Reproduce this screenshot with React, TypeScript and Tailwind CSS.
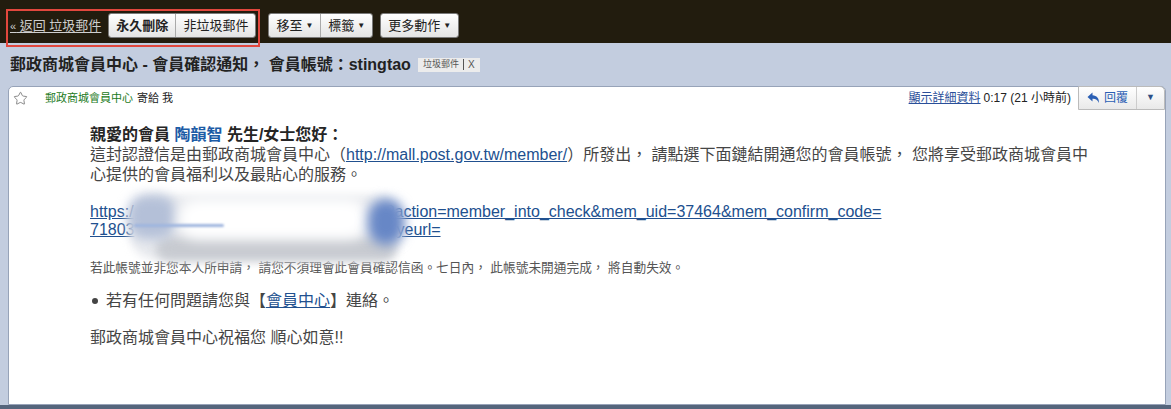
import { Star } from "lucide-react";

const font = "font-['Liberation_Sans','Noto_Sans_CJK_TC',sans-serif]";

const ToolButton = ({
  label,
  bold,
  caret,
  className,
}: {
  label: string;
  bold?: boolean;
  caret?: boolean;
  className?: string;
}) => {
  return (
    <button
      type="button"
      className={`flex h-[23px] items-center gap-[3px] bg-gradient-to-b from-[#ffffff] to-[#e4e4e4] px-[7px] text-[13px] text-[#222] ${
        bold ? "font-bold" : ""
      } ${className ?? ""}`}
    >
      {label}
      {caret && <span className="text-[8px] leading-none">▼</span>}
    </button>
  );
};

const ReplyIcon = () => (
  <svg width="13" height="12" viewBox="0 0 13 12">
    <path
      d="M5.5 0.5 L0.5 5 L5.5 9.5 V6.8 C8.5 6.6 10.6 7.8 11.8 11 C12.4 6.4 9.6 3.5 5.5 3.3 Z"
      fill="#2b5fb4"
    />
  </svg>
);

export default function App() {
  return (
    <div
      className={`relative h-[409px] w-[1171px] overflow-hidden bg-[#c3cddf] ${font}`}
    >
      {/* dark toolbar */}
      <div className="relative flex h-[43px] items-center bg-[#221c0e] pl-[10px] pt-[8px]">
        <a className="text-[13px] text-[#cfcfcf] underline underline-offset-2">
          <span className="text-[11px]">«</span> 返回 垃圾郵件
        </a>
        <div className="ml-[7px] flex rounded-[3px] border border-[#7a7a7a]">
          <ToolButton label="永久刪除" bold className="rounded-l-[2px]" />
          <ToolButton
            label="非垃圾郵件"
            className="rounded-r-[2px] border-l border-[#aaa]"
          />
        </div>
        <div className="ml-[12px] flex rounded-[3px] border border-[#7a7a7a]">
          <ToolButton label="移至" caret className="rounded-l-[2px]" />
          <ToolButton
            label="標籤"
            caret
            className="rounded-r-[2px] border-l border-[#aaa]"
          />
        </div>
        <div className="ml-[7px] flex rounded-[3px] border border-[#7a7a7a]">
          <ToolButton label="更多動作" caret className="rounded-[2px]" />
        </div>
        <div className="absolute left-[6px] top-[9px] h-[38px] w-[254px] border-2 border-[#e2473d]" />
      </div>

      {/* subject */}
      <div className="flex h-[43px] items-center gap-[7px] pl-[10px]">
        <h1 className="text-[16px] font-bold text-[#222]">
          郵政商城會員中心 - 會員確認通知， 會員帳號：stingtao
        </h1>
        <span className="flex h-[14px] items-center gap-[4px] bg-[#ececec] px-[5px] text-[9px] text-[#555]">
          垃圾郵件
          <span className="h-[11px] border-l border-[#555]" />
          <span className="text-[10px]">X</span>
        </span>
      </div>

      {/* message card */}
      <div className="ml-[8px] mr-[5px] h-[319px] rounded-t-[5px] border border-[#97a3b8] bg-white">
        <div className="flex h-[22px] items-center">
          <Star size={15} strokeWidth={1.3} className="ml-[4px] text-[#6f6f6f]" />
          <span className="ml-[17px] text-[11px] text-[#1b7a1b]">郵政商城會員中心</span>
          <span className="ml-[4px] text-[11px] text-[#222]">寄給 我</span>
          <div className="ml-auto flex items-center">
            <a className="text-[12px] text-[#2a4f99] underline">顯示詳細資料</a>
            <span className="ml-[3px] text-[12px] text-[#222]">0:17 (21 小時前)</span>
            <div className="ml-[7px] flex h-[24px] self-start rounded-tr-[5px] border border-[#bbb] bg-gradient-to-b from-[#ffffff] to-[#e9e9e9]">
              <button
                type="button"
                className="flex items-center gap-[4px] px-[8px] text-[12px] text-[#2b5fb4]"
              >
                <ReplyIcon />
                回覆
              </button>
              <button
                type="button"
                className="flex w-[28px] items-center justify-center border-l border-[#ccc] text-[9px] text-[#2d4f86]"
              >
                ▼
              </button>
            </div>
          </div>
        </div>

        <div className="relative pl-[81px] pt-[16px] text-[16px] leading-[20px] text-[#454545]">
          <p className="font-bold text-[#252525]">
            親愛的會員 <span className="text-[#1d5ca6]">陶韻智</span> 先生/女士您好：
          </p>
          <p>
            <span>這封認證信是由郵政商城會員中心（</span>
            <a className="text-[#21508f] underline">http://mall.post.gov.tw/member/</a>
            <span>）所發出， 請點選下面鏈結開通您的會員帳號， 您將享受郵政商城會員中</span>
            <br />
            <span>心提供的會員福利以及最貼心的服務。</span>
          </p>
          <p className="mt-[18px] leading-[18px]">
            <a className="text-[#21508f] underline">
              https:/
              <span className="inline-block w-[252px]" />
              ?action=member_into_check&amp;mem_uid=37464&amp;mem_confirm_code=
              <br />
              71803
              <span className="inline-block w-[262px]" />
              yeurl=
            </a>
          </p>
          <p className="mt-[21px] text-[12.7px] leading-[16px] text-[#555]">
            若此帳號並非您本人所申請， 請您不須理會此會員確認信函。七日內， 此帳號未開通完成， 將自動失效。
          </p>
          <div className="mt-[15px] flex items-center">
            <span className="ml-[2px] mr-[8px] h-[6px] w-[6px] rounded-full bg-[#444]" />
            <span>
              若有任何問題請您與【<a className="text-[#21508f] underline">會員中心</a>】連絡。
            </span>
          </div>
          <p className="mt-[17px]">郵政商城會員中心祝福您 順心如意!!</p>

          {/* redacted part of the link */}
          <div className="pointer-events-none absolute left-[119px] top-[84px] h-[72px] w-[285px]">
            <div className="absolute left-[2px] top-[2px] h-[64px] w-[272px] rounded-[24px] bg-[#e8eaee] blur-[4px]" />
            <div className="absolute left-[28px] top-[44px] h-[24px] w-[240px] rounded-[16px] bg-[#c8cbd1] blur-[5px]" />
            <div className="absolute left-[0px] top-[2px] h-[44px] w-[48px] rounded-[18px] bg-[#b4c0d8] blur-[6px]" />
            <div className="absolute left-[50px] top-[6px] h-[40px] w-[190px] rounded-[20px] bg-white blur-[7px]" />
            <div className="absolute left-[240px] top-[6px] h-[46px] w-[36px] rounded-full bg-[#6787c6] blur-[6px]" />
            <div className="absolute left-[6px] top-[31px] h-[3px] w-[90px] rounded-full bg-[#9fb5de] blur-[1px]" />
          </div>
        </div>
      </div>
      <div className="absolute bottom-0 left-0 h-[4px] w-full bg-[#55657c]" />
    </div>
  );
}
